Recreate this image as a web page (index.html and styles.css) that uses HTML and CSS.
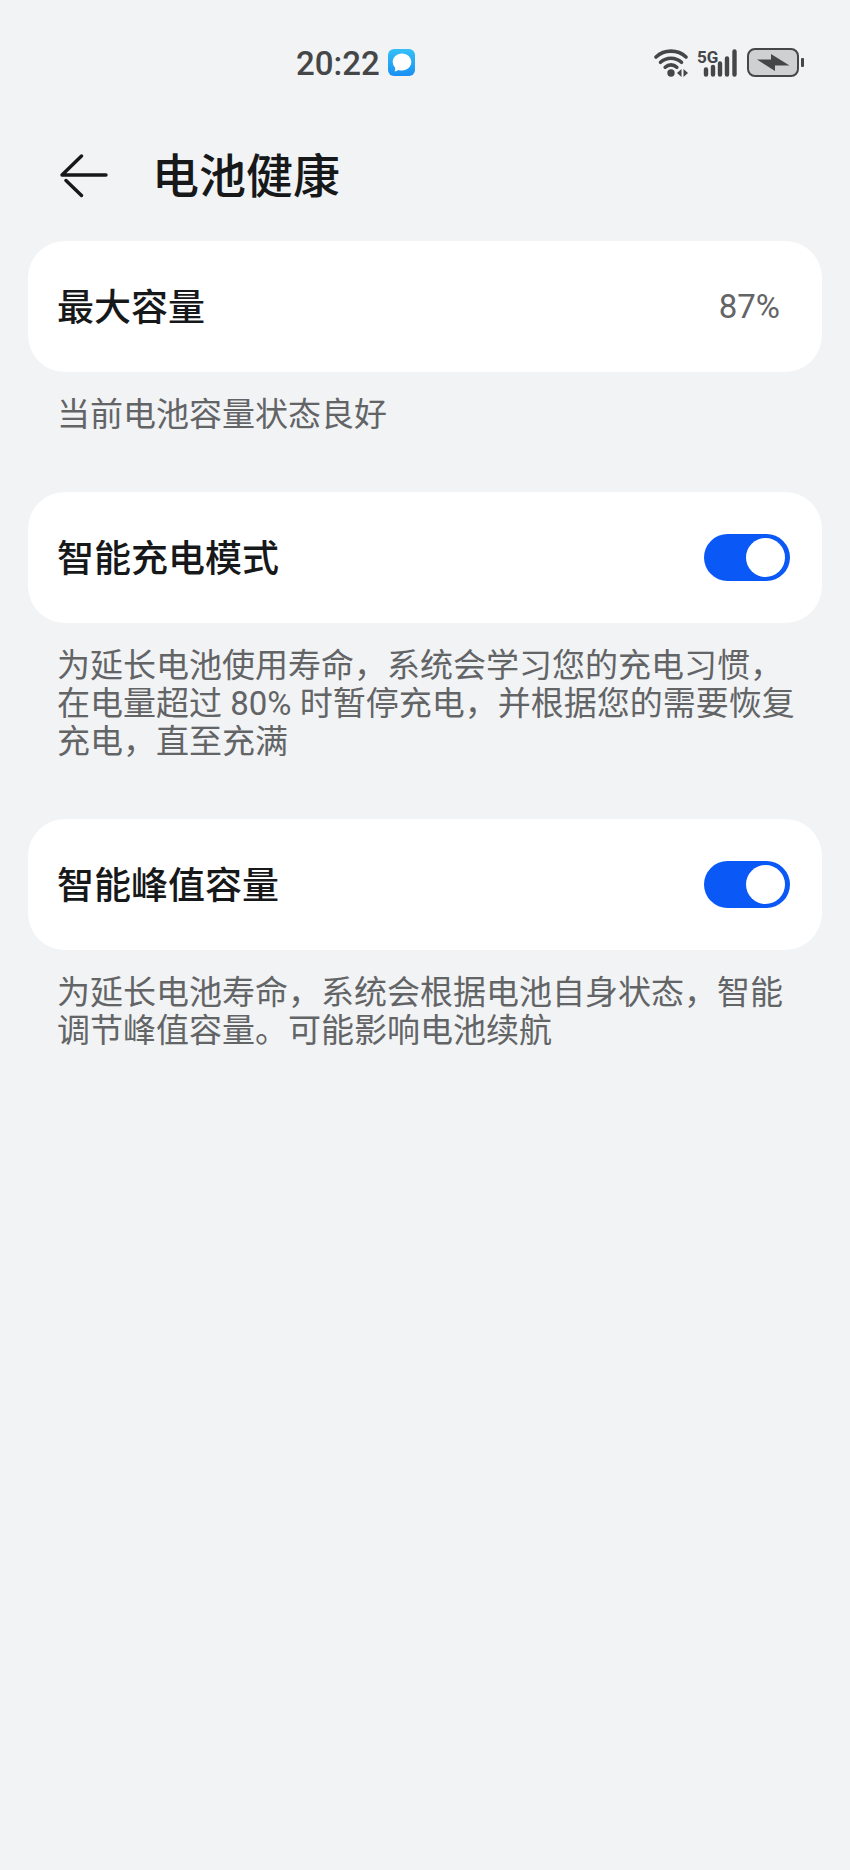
FILE: index.html
```html
<!DOCTYPE html>
<html lang="zh-CN">
<head>
    <meta charset="UTF-8">
    <meta name="viewport" content="width=device-width, initial-scale=1.0">
    <title>电池健康</title>
    <link rel="stylesheet" href="styles.css">
</head>
<body>
    <!-- Status bar -->
    <div class="status-bar">
        <div class="status-time">
            <span>20:22</span>
            <svg width="28" height="28" viewBox="0 0 28 28" aria-hidden="true">
                <defs>
                    <linearGradient id="chatFill" x1="0" y1="0" x2="0" y2="1">
                        <stop offset="0" stop-color="#35c0f8"/>
                        <stop offset="1" stop-color="#1a90f2"/>
                    </linearGradient>
                </defs>
                <rect width="27" height="27" rx="6" fill="url(#chatFill)"/>
                <path d="M14 4.500c5.200 0 9.300 3.700 9.300 8.500s-4.100 8.500-9.300 8.500c-1.300 0-2.400-.2-3.500-.6-1.200.9-2.500 1.300-4 1.300.7-1.100.9-2.300.5-3.600A8 8 0 0 1 4.700 13C4.700 8.200 8.800 4.500 14 4.500z" fill="#fff"/>
            </svg>
        </div>
        <div class="status-icons">
            <svg width="35" height="30" viewBox="0 0 35 30" aria-hidden="true">
                <g fill="none" stroke="#454648" stroke-width="3.6" stroke-linecap="round">
                    <path d="M2 9a22 22 0 0 1 30 0"/>
                    <path d="M6.500 14.300a15.500 15.500 0 0 1 21 0"/>
                    <path d="M11.200 19.200a8.500 8.500 0 0 1 11.600 0"/>
                </g>
                <circle cx="17" cy="25" r="3.700" fill="#454648"/>
                <path d="M27.500 21v8L23 25zM29.500 21v8l4.500-4z" fill="#454648"/>
            </svg>
            <svg width="42" height="30" viewBox="0 0 42 30" aria-hidden="true">
                <text class="network-type" x="0" y="15">5G</text>
                <path d="M9 21.500v5M16 19v7.500M23 15.500v11M30 10.500v16M37.500 3.500v23" fill="none" stroke="#454648" stroke-width="4.400" stroke-linecap="round"/>
            </svg>
            <svg width="58" height="30" viewBox="0 0 58 30" aria-hidden="true">
                <rect x="1" y="1" width="50" height="27" rx="7" fill="#cfd0d2" stroke="#454648" stroke-width="2"/>
                <path d="M10 11.500h14V6l18.500 11.500H28V23z" fill="#454648"/>
                <rect x="54" y="10" width="3" height="9" rx="1" fill="#454648"/>
            </svg>
        </div>
    </div>

    <!-- Page header -->
    <header class="page-header">
        <button type="button" class="back-btn" aria-label="返回">
            <svg width="48" height="44" viewBox="0 0 48 44" aria-hidden="true">
                <path d="M46 21H2L21.500 2M6 26.500L21.500 41.500" fill="none" stroke="#17181a" stroke-width="3.400" stroke-linecap="round" stroke-linejoin="round"/>
            </svg>
        </button>
        <h1>电池健康</h1>
    </header>

    <!-- Settings -->
    <main class="settings">
        <section>
            <div class="card">
                <h2>最大容量</h2>
                <span class="value">87%</span>
            </div>
            <p class="note">当前电池容量状态良好</p>
        </section>

        <section>
            <div class="card">
                <label for="smart-charge">智能充电模式</label>
                <input type="checkbox" role="switch" class="switch" id="smart-charge" checked>
            </div>
            <p class="note">为延长电池使用寿命，系统会学习您的充电习惯，在电量超过 80% 时暂停充电，并根据您的需要恢复充电，直至充满</p>
        </section>

        <section>
            <div class="card">
                <label for="peak-capacity">智能峰值容量</label>
                <input type="checkbox" role="switch" class="switch" id="peak-capacity" checked>
            </div>
            <p class="note">为延长电池寿命，系统会根据电池自身状态，智能调节峰值容量。可能影响电池续航</p>
        </section>
    </main>
</body>
</html>
```

FILE: styles.css
```css
/* Global styles */
* {
    box-sizing: border-box;
}

body {
    margin: 0;
    min-height: 100vh;
    background-color: #f1f3f5;
    color: #17181a;
    font-family: Roboto, "Noto Sans CJK SC", sans-serif;
}

h1, h2, p {
    margin: 0;
}

svg {
    display: block;
}

/* Status bar */
.status-bar {
    display: flex;
    justify-content: space-between;
    align-items: center;
    height: 126px;
    padding: 0 45px 0 296px;
    color: #454648;
}

.status-time, .status-icons {
    display: flex;
    align-items: center;
}

.status-time {
    gap: 8px;
    font-size: 33px;
    font-weight: 500;
}

.status-icons {
    gap: 8px;
}

.network-type {
    font-size: 17px;
    font-weight: 700;
    fill: #454648;
}

/* Page header */
.page-header {
    display: flex;
    align-items: center;
    gap: 44px;
    height: 100px;
    padding: 0 60px;
}

.back-btn {
    padding: 0;
    border: none;
    background: none;
    cursor: pointer;
}

h1 {
    padding-top: 2px;
    font-size: 47px;
    font-weight: 500;
    line-height: 60px;
}

/* Settings */
.settings {
    display: grid;
    gap: 58px;
    padding: 15px 28px;
}

.card {
    display: flex;
    justify-content: space-between;
    align-items: center;
    height: 131px;
    padding: 0 32px 0 29px;
    border-radius: 37px;
    background-color: #fff;
}

.card h2, .card label {
    padding-top: 4px;
    font-size: 37px;
    font-weight: 500;
    line-height: 48px;
}

.value {
    padding-right: 10px;
    color: #636466;
    font-size: 33px;
}

.note {
    margin-top: 24px;
    padding: 0 24px 0 29px;
    color: #636466;
    font-size: 33px;
    line-height: 38px;
}

/* Toggle switch */
.switch {
    appearance: none;
    display: flex;
    align-items: center;
    width: 86px;
    height: 47px;
    margin: 0;
    padding: 0 5px;
    border-radius: 24px;
    background-color: #c8c9cc;
    cursor: pointer;
}

.switch::before {
    content: "";
    width: 39px;
    height: 39px;
    border-radius: 50%;
    background-color: #fff;
}

.switch:checked {
    justify-content: flex-end;
    background-color: #0a59f7;
}
```
